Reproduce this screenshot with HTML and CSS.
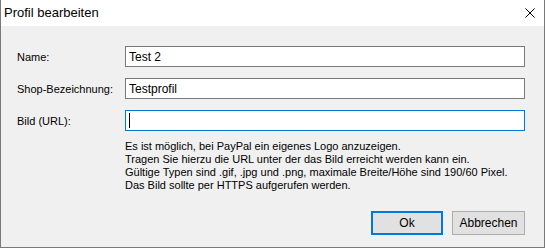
FILE: index.html
```html
<!DOCTYPE html>
<html lang="de">

<head>
    <meta charset="UTF-8" />
    <title>Profil bearbeiten</title>
    <link rel="stylesheet" href="styles.css">
</head>

<body>

    <div class="dialog">
        <div class="dialog__title">
            <span class="dialog__caption">Profil bearbeiten</span>
            <svg class="dialog__close" width="10" height="10" viewBox="0 0 10 10">
                <path d="M0.5 0.5 L9.5 9.5 M9.5 0.5 L0.5 9.5" stroke="#000" stroke-width="1" fill="none" />
            </svg>
        </div>

        <div class="dialog__body">
            <div class="form__row">
                <label class="form__label">Name:</label>
                <div class="form__input">Test 2</div>
            </div>
            <div class="form__row">
                <label class="form__label">Shop-Bezeichnung:</label>
                <div class="form__input">Testprofil</div>
            </div>
            <div class="form__row">
                <label class="form__label">Bild (URL):</label>
                <div class="form__input form__input--focus"><span class="caret"></span></div>
            </div>

            <p class="form__hint">
                Es ist möglich, bei PayPal ein eigenes Logo anzuzeigen.<br>
                Tragen Sie hierzu die URL unter der das Bild erreicht werden kann ein.<br>
                Gültige Typen sind .gif, .jpg und .png, maximale Breite/Höhe sind 190/60 Pixel.<br>
                Das Bild sollte per HTTPS aufgerufen werden.
            </p>

            <div class="dialog__buttons">
                <button class="btn btn--default">Ok</button>
                <button class="btn">Abbrechen</button>
            </div>
        </div>
    </div>

</body>

</html>
```

FILE: styles.css
```css
body {
    margin: 0;
    background: #fff;
    font-family: "Liberation Sans", Arial, sans-serif;
    font-size: 11px;
    color: #000;
}

.dialog {
    width: 545px;
    height: 248px;
    box-sizing: border-box;
    border: 1px solid #7a7a7a;
    border-top: none;
    display: flex;
    flex-direction: column;
}

.dialog__title {
    height: 26px;
    flex: 0 0 26px;
    background: #fff;
    display: flex;
    align-items: center;
    justify-content: space-between;
    padding: 0 9px 0 3px;
}

.dialog__caption {
    font-size: 13px;
    color: #000;
    padding-bottom: 1px;
}

.dialog__close {
    display: block;
}

.dialog__body {
    flex: 1;
    background: #f0f0f0;
    padding: 20px 19px 0 16px;
}

.form__row {
    display: flex;
    align-items: center;
    height: 21px;
    margin-bottom: 11px;
}

.form__label {
    width: 108px;
    flex: 0 0 108px;
}

.form__input {
    flex: 1;
    height: 21px;
    box-sizing: border-box;
    background: #fff;
    border: 1px solid #7a7a7a;
    padding: 0 3px;
    display: flex;
    align-items: center;
    font-size: 12px;
}

.form__input--focus {
    border-color: #0078d7;
}

.caret {
    display: block;
    width: 1px;
    height: 15px;
    background: #000;
}

.form__hint {
    margin: -2px 0 0 108px;
    line-height: 13px;
}

.dialog__buttons {
    display: flex;
    justify-content: flex-end;
    gap: 9px;
    margin-top: 19px;
}

.btn {
    width: 73px;
    height: 24px;
    box-sizing: border-box;
    background: #e1e1e1;
    border: 1px solid #adadad;
    font-family: inherit;
    font-size: 12px;
    color: #000;
    padding: 0;
}

.btn--default {
    width: 72px;
    border: 2px solid #0078d7;
}
```
